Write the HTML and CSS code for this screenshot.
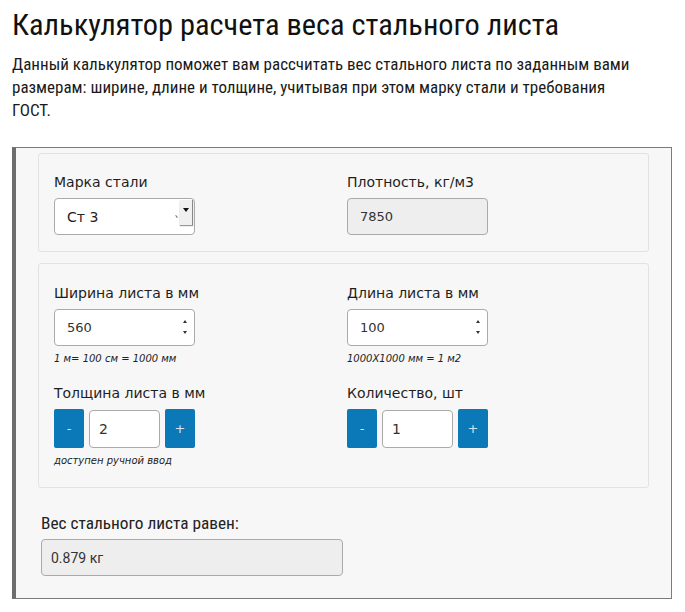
FILE: index.html
```html
<!DOCTYPE html>
<html lang="ru">
<head>
<meta charset="utf-8">
<title>Калькулятор расчета веса стального листа</title>
<link rel="stylesheet" href="styles.css">
</head>
<body>
<h1 class="title">Калькулятор расчета веса стального листа</h1>
<p class="lead">Данный калькулятор поможет вам рассчитать вес стального листа по заданным вами размерам: ширине, длине и толщине, учитывая при этом марку стали и требования ГОСТ.</p>

<div class="calc">
  <div class="group">
    <div class="field">
      <label class="label">Марка стали</label>
      <div class="select">
        <span class="select-value">Ст 3</span>
        <span class="select-tick"></span>
        <span class="select-arrow"></span>
      </div>
    </div>
    <div class="field">
      <label class="label">Плотность, кг/м3</label>
      <div class="box box-readonly">7850</div>
    </div>
  </div>

  <div class="group group-sizes">
    <div class="field">
      <label class="label">Ширина листа в мм</label>
      <div class="box box-number">560<span class="spin"></span></div>
      <div class="hint">1 м= 100 см = 1000 мм</div>
    </div>
    <div class="field">
      <label class="label">Длина листа в мм</label>
      <div class="box box-number">100<span class="spin"></span></div>
      <div class="hint">1000Х1000 мм = 1 м2</div>
    </div>
    <div class="field">
      <label class="label">Толщина листа в мм</label>
      <div class="stepper">
        <button class="step-btn">-</button>
        <div class="box step-input">2</div>
        <button class="step-btn">+</button>
      </div>
      <div class="hint">доступен ручной ввод</div>
    </div>
    <div class="field">
      <label class="label">Количество, шт</label>
      <div class="stepper">
        <button class="step-btn">-</button>
        <div class="box step-input">1</div>
        <button class="step-btn">+</button>
      </div>
    </div>
  </div>

  <div class="result">
    <div class="result-label">Вес стального листа равен:</div>
    <div class="box box-readonly result-box">0.879 кг</div>
  </div>
</div>
</body>
</html>
```

FILE: styles.css
```css
html, body {
  margin: 0;
  padding: 0;
  background: #fff;
}

body {
  padding: 0 13px 0 12px;
  color: #111;
  font-family: "DejaVu Sans", Verdana, sans-serif;
}

/* Heading, intro and result caption use narrow Roboto */
.title {
  margin: 6px 0 0;
  font-family: "Roboto", Arial, sans-serif;
  font-stretch: 75%;
  font-weight: normal;
  font-size: 30.4px;
  line-height: 38px;
  color: #111;
}

.lead {
  margin: 9px 0 0;
  max-width: 632px;
  font-family: "Roboto", Arial, sans-serif;
  font-stretch: 75%;
  font-size: 17px;
  line-height: 23px;
  color: #1a1a1a;
}

.calc {
  margin-top: 25px;
  background: #f7f7f7;
  border: 1px solid #7b7b7b;
  border-left: 4px solid #6d6d6d;
  padding: 5px 22px 22px 22px;
}

.group {
  display: grid;
  grid-template-columns: 293px 1fr;
  border: 1px solid #e2e2e2;
  border-radius: 3px;
  padding: 19px 15px 16px;
  margin-bottom: 11px;
}

.group-sizes {
  padding-top: 20px;
  padding-bottom: 19px;
  row-gap: 18px;
}

.label {
  display: block;
  font-size: 14px;
  line-height: 18px;
  margin-bottom: 7px;
  color: #1e1e1e;
}

.box {
  box-sizing: border-box;
  height: 37px;
  width: 141px;
  border: 1px solid #aaa;
  border-radius: 4px;
  background: #fff;
  padding: 0 12px;
  display: flex;
  align-items: center;
  font-size: 13px;
  color: #333;
  position: relative;
}

.box-readonly {
  background: #eee;
}

.select {
  box-sizing: border-box;
  position: relative;
  height: 37px;
  width: 141px;
  border: 1px solid #aaa;
  border-radius: 4px;
  background: #fff;
  padding: 0 12px;
  display: flex;
  align-items: center;
  font-size: 14px;
  color: #222;
}

.select-tick {
  position: absolute;
  right: 17px;
  top: 16px;
  width: 1px;
  height: 3px;
  background: #666;
  transform: rotate(-35deg);
}

.select-arrow {
  position: absolute;
  right: 1px;
  top: 1px;
  width: 12px;
  height: 25px;
  background: #f0f0f0;
  border-right: 1px solid #888;
  box-shadow: 0 1px 1px #999;
}

.select-arrow::after {
  content: "";
  position: absolute;
  left: 3px;
  top: 8px;
  border-left: 3px solid transparent;
  border-right: 3px solid transparent;
  border-top: 4px solid #111;
}

/* number input spinner */
.spin {
  position: absolute;
  right: 7px;
  top: 10px;
  width: 4px;
  height: 16px;
}

.spin::before,
.spin::after {
  content: "";
  position: absolute;
  left: 0;
  border-left: 2px solid transparent;
  border-right: 2px solid transparent;
}

.spin::before {
  top: 0;
  border-bottom: 3px solid #333;
}

.spin::after {
  bottom: 2px;
  border-top: 3px solid #333;
}

.hint {
  margin-top: 6px;
  font-size: 10px;
  font-style: italic;
  color: #222;
  line-height: 14px;
}

.stepper {
  display: flex;
  align-items: center;
  gap: 5px;
}

.step-btn {
  width: 30px;
  height: 39px;
  border: 0;
  border-radius: 2px;
  background: #0b78b7;
  color: #cfe3f0;
  font-family: "DejaVu Sans", sans-serif;
  font-size: 13px;
  padding: 0;
}

.step-input {
  width: 71px;
  height: 38px;
  padding: 0 9px;
  font-size: 14px;
}

.result {
  padding: 14px 3px 0;
}

.result-label {
  font-family: "Roboto", Arial, sans-serif;
  font-stretch: 75%;
  font-size: 17.3px;
  line-height: 20px;
  margin-bottom: 6px;
  color: #222;
}

.result-box {
  width: 302px;
  font-family: "Roboto", Arial, sans-serif;
  font-size: 14px;
  padding-left: 9px;
  color: #333;
}
```
